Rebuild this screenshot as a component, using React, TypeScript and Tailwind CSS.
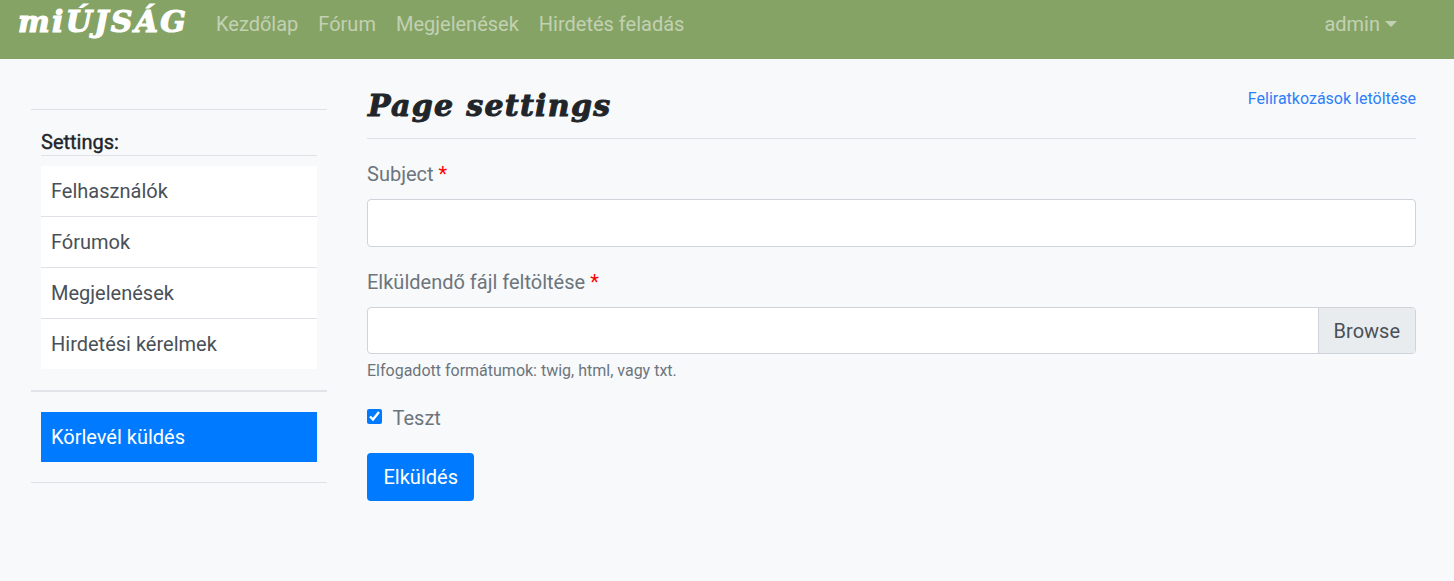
const navLinks = ["Kezdőlap", "Fórum", "Megjelenések", "Hirdetés feladás"];
const sideLinks = ["Felhasználók", "Fórumok", "Megjelenések", "Hirdetési kérelmek"];

export default function App() {
  return (
    <div className="min-h-[581px] bg-[#f8f9fa] font-['Roboto',sans-serif] text-[20px] leading-[30px] text-[#212529]">
      {/* Navbar */}
      <nav className="flex h-[59px] items-start bg-[#86a366] pl-[18px] pr-[57px]">
        <a className="mt-[4px] mr-[29px] w-[169px] font-['DejaVu_Serif',serif] text-[30px] leading-[36px] font-bold italic tracking-[2.3px] whitespace-nowrap text-white [-webkit-text-stroke:1.2px_white]">
          miÚJSÁG
        </a>
        <div className="mt-[9px] flex gap-5">
          {navLinks.map((link) => (
            <a key={link} className="text-white/50">
              {link}
            </a>
          ))}
        </div>
        <div className="mt-[9px] ml-auto flex items-center gap-[5px] text-white/50">
          admin
          <span className="h-0 w-0 border-x-[6px] border-t-[6px] border-x-transparent border-t-white/50" />
        </div>
      </nav>

      <div className="flex px-[31px] pr-[38px]">
        {/* Sidebar */}
        <aside className="w-[296px] shrink-0 pt-[50px]">
          <hr className="border-t border-[#dfe1e5]" />
          <div className="px-[10px] pt-[19px]">
            <div className="border-b border-[#dfe1e5] text-[20px] leading-[26px] [-webkit-text-stroke:0.4px_#212529]">
              Settings:
            </div>
            <ul className="mt-[10px] bg-white">
              {sideLinks.map((link, idx) => (
                <li
                  key={link}
                  className={`flex items-center px-[10px] text-[#495057] ${idx < 3 ? "h-[51px] border-b border-[#dee2e6]" : "h-[50px]"}`}
                >
                  {link}
                </li>
              ))}
            </ul>
          </div>
          <hr className="mt-[21px] border-t-2 border-[#e2e3e8]" />
          <div className="mx-[10px] mt-[20px] flex h-[50px] items-center bg-[#007bff] px-[10px] text-white">
            Körlevél küldés
          </div>
          <hr className="mt-[20px] border-t border-[#dfe1e5]" />
        </aside>

        {/* Main */}
        <main className="ml-[40px] flex-1 pt-[24px]">
          <div className="flex items-start justify-between border-b border-[#dee2e6] pb-[10px]">
            <h1 className="mt-[1px] ml-[1px] font-['DejaVu_Serif',serif] text-[30px] leading-[44px] font-bold italic tracking-[1.3px] text-[#212529] [-webkit-text-stroke:1px_#212529]">
              Page settings
            </h1>
            <a className="mt-[4px] text-[16px] leading-[24px] text-[#2d7ff9]">Feliratkozások letöltése</a>
          </div>

          <label className="mt-[20px] block text-[#6c757d]">
            Subject <span className="text-[#ff0000]">*</span>
          </label>
          <input className="mt-[10px] block h-[48px] w-full rounded border border-[#ced4da] bg-white" />

          <label className="mt-[20px] block text-[#6c757d]">
            Elküldendő fájl feltöltése <span className="text-[#ff0000]">*</span>
          </label>
          <div className="mt-[10px] flex h-[47px] overflow-hidden rounded border border-[#ced4da] bg-white">
            <div className="flex-1" />
            <div className="flex items-center border-l border-[#ced4da] bg-[#e9ecef] px-[15px] text-[#495057]">Browse</div>
          </div>
          <p className="mt-[5px] text-[16px] leading-[24px] text-[#6c757d]">Elfogadott formátumok: twig, html, vagy txt.</p>

          <label className="mt-[20px] flex items-center text-[#6c757d]">
            <input type="checkbox" defaultChecked className="mb-[3px] h-[15px] w-[15px] accent-[#007bff]" />
            <span className="ml-[10.5px]">Teszt</span>
          </label>

          <button className="mt-[20px] block h-[48px] rounded bg-[#007bff] px-[16.5px] text-white">Elküldés</button>
        </main>
      </div>
    </div>
  );
}
